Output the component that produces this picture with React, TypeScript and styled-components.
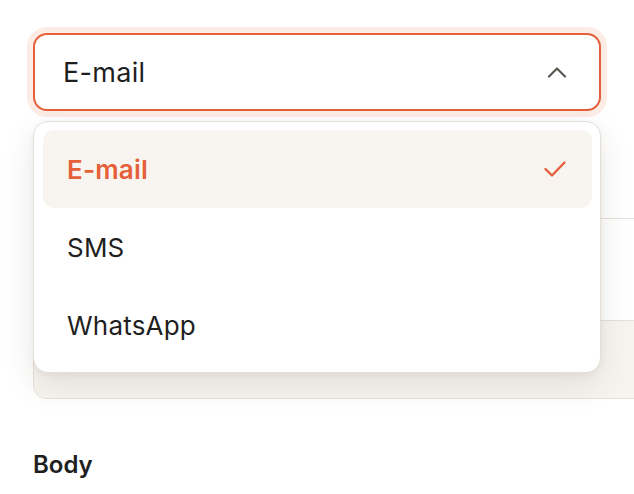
import styled, { createGlobalStyle } from "styled-components"

const GlobalStyle = createGlobalStyle`
  html, body {
    margin: 0;
    padding: 0;
    background: #ffffff;
    font-family: Inter, "Noto Sans", sans-serif;
    color: #1f1f1f;
  }
`

// Styles
const Page = styled.div`
  padding: 33px 0 0 33px;
  width: 634px;
  height: 494px;
  box-sizing: border-box;
  overflow: hidden;
`
const Field = styled.div`
  position: relative;
  width: 568px;
`
const Trigger = styled.button`
  display: flex;
  align-items: center;
  justify-content: space-between;
  width: 100%;
  height: 78px;
  box-sizing: border-box;
  padding: 0 32px 0 28px;
  background: #ffffff;
  border: 2px solid #e5603a;
  border-radius: 14px;
  box-shadow: 0 0 0 6px #fdebe5;
  font-family: inherit;
  font-size: 27px;
  letter-spacing: 0.3px;
  color: #1f1f1f;
  cursor: pointer;
`
const Menu = styled.ul`
  position: absolute;
  top: 88px;
  left: 0;
  z-index: 2;
  width: 100%;
  box-sizing: border-box;
  margin: 0;
  padding: 8px 8px 8px 9px;
  list-style: none;
  background: #ffffff;
  border: 1.5px solid #e4dfd6;
  border-radius: 15px;
  box-shadow: 0 12px 32px rgba(60, 45, 30, 0.11), 0 2px 6px rgba(60, 45, 30, 0.05);
`
const Option = styled.li<{ $selected?: boolean }>`
  display: flex;
  align-items: center;
  justify-content: space-between;
  height: 78px;
  padding: 0 25px 0 24px;
  border-radius: 11px;
  font-size: 26px;
  letter-spacing: 0.2px;
  font-weight: ${p => (p.$selected ? 600 : 400)};
  color: ${p => (p.$selected ? "#e5603a" : "#1f1f1f")};
  background: ${p => (p.$selected ? "#f8f5f0" : "transparent")};
`
const Card = styled.div`
  margin-top: 107px;
  width: 640px;
  height: 181px;
  box-sizing: border-box;
  border: 1.5px solid #e5e0d8;
  border-right: none;
  border-radius: 14px 0 0 14px;
  display: flex;
  flex-direction: column;
  overflow: hidden;
`
const CardBody = styled.div`
  flex: 0 0 101px;
  background: #ffffff;
  border-bottom: 1.5px solid #e5e0d8;
`
const CardFooter = styled.div`
  flex: 1;
  background: #f7f4ef;
`
const Label = styled.div`
  margin-top: 51px;
  font-size: 24px;
  font-weight: 600;
  color: #1f1f1f;
`

const ChevronUp = () => (
  <svg width="20" height="12" viewBox="0 0 20 12" fill="none">
    <path d="M2 10.5 L10 2.5 L18 10.5" stroke="#5b5752" strokeWidth="2.2" strokeLinecap="round" strokeLinejoin="round" />
  </svg>
)

const Check = () => (
  <svg width="24" height="18" viewBox="0 0 24 18" fill="none">
    <path d="M2.5 9 L9 15.5 L21.5 2.5" stroke="#e5603a" strokeWidth="2.4" strokeLinecap="round" strokeLinejoin="round" />
  </svg>
)

const options = ["E-mail", "SMS", "WhatsApp"]

const App: React.FC = () => {
  const selected = "E-mail"

  return (
    <Page>
      <GlobalStyle />
      <Field>
        <Trigger>
          <span>{selected}</span>
          <ChevronUp />
        </Trigger>
        <Menu>
          {options.map(o => (
            <Option key={o} $selected={o === selected}>
              <span>{o}</span>
              {o === selected && <Check />}
            </Option>
          ))}
        </Menu>
      </Field>
      <Card>
        <CardBody />
        <CardFooter />
      </Card>
      <Label>Body</Label>
    </Page>
  )
}

export default App
